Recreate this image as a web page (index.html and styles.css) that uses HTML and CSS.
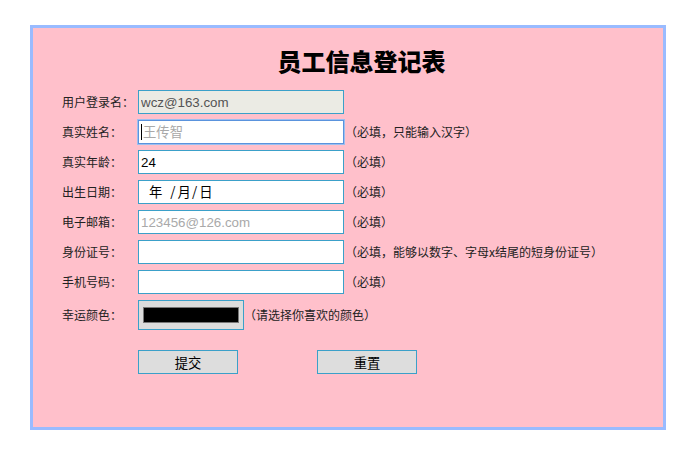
FILE: index.html
```html
<!DOCTYPE html>
<html lang="zh-CN">
<head>
<meta charset="utf-8">
<title>员工信息登记表</title>
<link rel="stylesheet" href="styles.css">
</head>
<body>
<div class="box">
  <h1 class="title">员工信息登记表</h1>
  <form class="form">
    <label class="label">用户登录名：</label>
    <input class="field disabled" type="text" value="wcz@163.com" disabled>
    <span class="hint"></span>

    <label class="label">真实姓名：</label>
    <div class="field focused"><span class="caret"></span><span class="ph">王传智</span></div>
    <span class="hint">（必填，只能输入汉字）</span>

    <label class="label">真实年龄：</label>
    <input class="field" type="text" value="24">
    <span class="hint">（必填）</span>

    <label class="label">出生日期：</label>
    <div class="field date"><span class="d1">年</span><span class="d2">/</span><span class="d3">月</span><span class="d4">/</span><span class="d5">日</span></div>
    <span class="hint">（必填）</span>

    <label class="label">电子邮箱：</label>
    <input class="field" type="text" placeholder="123456@126.com">
    <span class="hint">（必填）</span>

    <label class="label">身份证号：</label>
    <input class="field" type="text">
    <span class="hint">（必填，能够以数字、字母x结尾的短身份证号）</span>

    <label class="label">手机号码：</label>
    <input class="field" type="text">
    <span class="hint">（必填）</span>

    <label class="label">幸运颜色：</label>
    <div class="color-row">
      <div class="color"><span class="swatch"></span></div>
      <span class="hint">（请选择你喜欢的颜色）</span>
    </div>
  </form>
  <div class="buttons">
    <button class="btn" type="button">提交</button>
    <button class="btn" type="button">重置</button>
  </div>
</div>
</body>
</html>
```

FILE: styles.css
```css
html, body {
  margin: 0;
  padding: 0;
  background: #ffffff;
}
body {
  font-family: "Noto Sans CJK SC", "Liberation Sans", sans-serif;
  color: #222;
}
.box {
  margin: 25px 0 0 30px;
  width: 630px;
  height: 382px;
  padding-top: 17px;
  background: #ffc0cb;
  border: 3px solid #99bbff;
}
.title {
  margin: 0 2px 13px 29px;
  height: 32px;
  line-height: 32px;
  font-size: 24px;
  font-weight: 900;
  text-align: center;
  color: #000;
}
.form {
  display: grid;
  grid-template-columns: 76px 206px auto;
  grid-auto-rows: auto;
  row-gap: 6px;
  align-items: center;
  margin-left: 29px;
}
.label {
  font-size: 12px;
  line-height: 16px;
  color: #222;
  white-space: nowrap;
}
.field {
  box-sizing: border-box;
  width: 206px;
  height: 24px;
  margin: 0;
  padding: 0 2px;
  border: 1px solid #3ba0c9;
  background: #fff;
  font-family: "Liberation Sans", "Noto Sans CJK SC", sans-serif;
  font-size: 13.333px;
  color: #000;
  outline: none;
  display: flex;
  align-items: center;
}
.field::placeholder {
  color: #a9a9a9;
}
.disabled {
  background: #ebebe4;
  color: #545454;
}
.focused {
  border: 1px solid #5a93dd;
  box-shadow: 0 0 0 1px #9cbff0;
}
.caret {
  display: inline-block;
  width: 1px;
  height: 16px;
  background: #000;
  margin-right: 1px;
}
.ph {
  color: #a9a9a9;
  font-family: "Noto Sans CJK SC", sans-serif;
  font-size: 13.333px;
  line-height: 16px;
}
.date {
  font-family: "Noto Sans CJK SC", sans-serif;
  padding-left: 10px;
  line-height: 16px;
}
.d2 { margin-left: 8px; }
.d3 { margin-left: 2px; }
.d4 { margin-left: 1px; }
.d5 { margin-left: 2px; }
.hint {
  font-size: 12px;
  line-height: 16px;
  color: #222;
  padding-left: 1px;
  white-space: nowrap;
}
.color-row {
  grid-column: 2 / 4;
  display: flex;
  align-items: center;
  height: 30px;
}
.color {
  box-sizing: border-box;
  width: 106px;
  height: 30px;
  border: 1px solid #3ba0c9;
  background: #dcdcdc;
  padding: 6px 4px;
}
.swatch {
  display: block;
  box-sizing: border-box;
  width: 96px;
  height: 16px;
  background: #000;
  border: 1px solid #777;
}
.color-row .hint {
  padding-left: 0;
}
.buttons {
  display: flex;
  gap: 79px;
  margin: 20px 0 0 105px;
}
.btn {
  box-sizing: border-box;
  width: 100px;
  height: 24px;
  margin: 0;
  padding: 0;
  border: 1px solid #3ba0c9;
  background: #dddddd;
  font-family: "Noto Sans CJK SC", sans-serif;
  font-size: 13.333px;
  color: #000;
}
```
